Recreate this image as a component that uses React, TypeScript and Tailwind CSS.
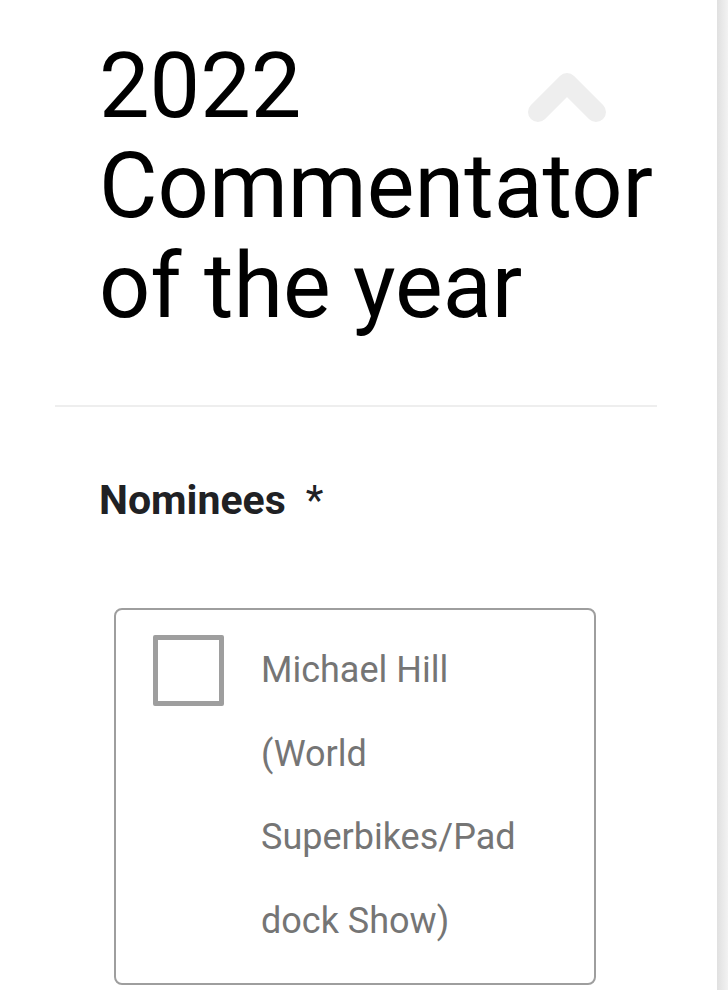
export default function App() {
  return (
    <div className="flex min-h-[990px] w-full bg-white font-['Roboto','Noto_Sans',sans-serif]">
      <div className="flex-1 pl-[55px] pt-[37px]">
        <div className="w-[602px]">
          {/* header */}
          <div className="relative pl-[44px]">
            <h1 className="text-[90px] font-normal leading-[100px] text-black">
              2022
              <br />
              Commentator
              <br />
              of the year
            </h1>
            <svg
              className="absolute left-[472px] top-[35px]"
              width="80"
              height="52"
              viewBox="0 0 80 52"
              fill="none"
            >
              <polyline
                points="11,40 40,11 69,40"
                stroke="#eeeeee"
                strokeWidth="20"
                strokeLinecap="round"
                strokeLinejoin="round"
              />
            </svg>
          </div>

          <div className="mt-[68px] h-[2px] bg-[#eeeeee]" />

          {/* question */}
          <div className="pl-[44px]">
            <div className="mt-[69px] text-[41px] leading-[48px] text-[#202124]">
              <span className="font-bold">Nominees</span>
              <span className="ml-[20px] font-normal">*</span>
            </div>

            <label className="ml-[15px] mt-[84px] flex w-[482px] items-start rounded-[8px] border-2 border-[#9e9e9e] pb-[20px] pl-[37px] pt-[19px]">
              <span className="mt-[6px] h-[71px] w-[71px] shrink-0 rounded-[2px] border-[5px] border-[#9e9e9e]" />
              <span className="ml-[37px] w-[262px] text-[36px] leading-[83.5px] text-[#757575] [overflow-wrap:break-word]">
                Michael Hill (World Superbikes/{"\u2060"}Paddock Show)
              </span>
            </label>
          </div>
        </div>
      </div>
      <div className="w-[11px] shrink-0 bg-gradient-to-r from-[#e0e0e0] to-[#f2f2f2]" />
    </div>
  );
}
